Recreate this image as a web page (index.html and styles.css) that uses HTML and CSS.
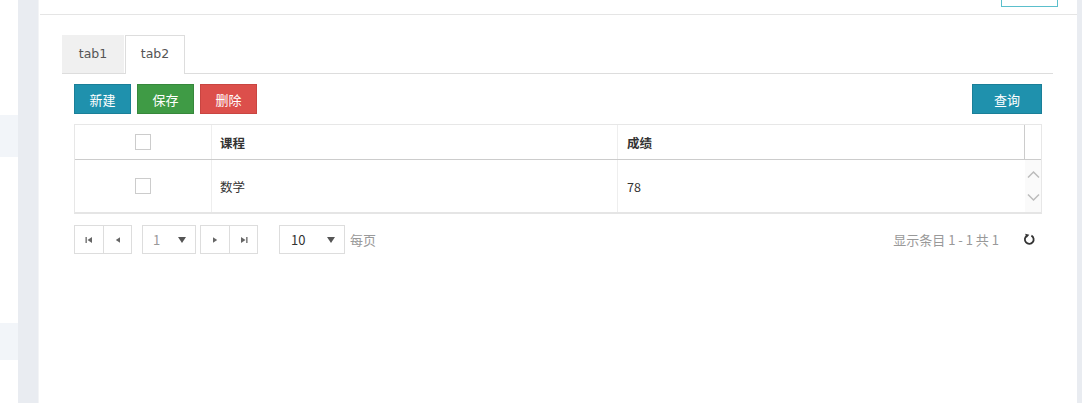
FILE: index.html
```html
<!DOCTYPE html>
<html>
	<head>
		<meta charset="UTF-8" />
		<title>tab2</title>
		<link rel="stylesheet" href="styles.css">
	</head>
	<body>
		<div class="side">
			<div class="side-item first"></div>
			<div class="side-item second"></div>
		</div>
		<div class="gutter"></div>
		<div class="panel">
			<div class="panel-head">
				<span class="head-btn"></span>
			</div>
			<div class="panel-body">
				<div class="tabs">
					<div class="tab">tab1</div>
					<div class="tab active">tab2</div>
				</div>
				<div class="tab-pane">
					<div class="toolbar">
						<button class="btn btn-info">新建</button>
						<button class="btn btn-success">保存</button>
						<button class="btn btn-danger">删除</button>
						<button class="btn btn-info right">查询</button>
					</div>
					<div class="grid">
						<div class="grid-row grid-head">
							<div class="cell check"><span class="box"></span></div>
							<div class="cell course">课程</div>
							<div class="cell score">成绩</div>
							<div class="cell pad"></div>
						</div>
						<div class="grid-row grid-body">
							<div class="cell check"><span class="box"></span></div>
							<div class="cell course">数学</div>
							<div class="cell score">78</div>
							<div class="cell scroll">
								<svg width="13" height="9" viewBox="0 0 13 9"><path d="M1 7.5 L6.5 2 L12 7.5" fill="none" stroke="#bbbbbb" stroke-width="1.5"/></svg>
								<svg width="13" height="9" viewBox="0 0 13 9"><path d="M1 1.5 L6.5 7 L12 1.5" fill="none" stroke="#bbbbbb" stroke-width="1.5"/></svg>
							</div>
						</div>
					</div>
					<div class="pager">
						<div class="pager-group">
							<span class="pg-btn"><svg width="8" height="8" viewBox="0 0 8 8"><rect x="0.5" y="1" width="1.3" height="6" fill="#666"/><path d="M7 1 L2.5 4 L7 7 Z" fill="#666"/></svg></span>
							<span class="pg-btn"><svg width="8" height="8" viewBox="0 0 8 8"><path d="M6 1.2 L1.8 4 L6 6.8 Z" fill="#666"/></svg></span>
						</div>
						<span class="pg-select page-num"><span class="val muted">1</span><span class="caret"></span></span>
						<div class="pager-group last">
							<span class="pg-btn"><svg width="8" height="8" viewBox="0 0 8 8"><path d="M2 1.2 L6.2 4 L2 6.8 Z" fill="#666"/></svg></span>
							<span class="pg-btn"><svg width="8" height="8" viewBox="0 0 8 8"><path d="M1 1 L5.5 4 L1 7 Z" fill="#666"/><rect x="6.2" y="1" width="1.3" height="6" fill="#666"/></svg></span>
						</div>
						<span class="pg-select page-size"><span class="val">10</span><span class="caret"></span></span>
						<span class="per-page">每页</span>
						<span class="pager-info">显示条目 1 - 1 共 1</span>
						<span class="refresh">
							<svg width="13" height="13" viewBox="0 0 13 13"><path d="M8.4 2.6 A4.4 4.4 0 1 1 3.8 2.8" fill="none" stroke="#333" stroke-width="1.8"/><path d="M2.2 0.8 L6.3 1.7 L3.5 5 Z" fill="#333"/></svg>
						</span>
					</div>
				</div>
			</div>
		</div>
		<div class="gutter thin"></div>
	</body>
</html>
```

FILE: styles.css
```css
body {
	margin: 0;
	height: 403px;
	display: flex;
	overflow: hidden;
	font-family: "Open Sans", "Noto Sans CJK SC", sans-serif;
	font-size: 13px;
	color: #333;
	background: #fff;
}
.side {
	width: 18px;
	flex: none;
}
.side-item {
	height: 42px;
	background: #f2f5f9;
}
.side-item.first {
	margin-top: 115px;
}
.side-item.second {
	margin-top: 166px;
	height: 37px;
}
.gutter {
	width: 20px;
	flex: none;
	background: #e9ecf1;
}
.gutter.thin {
	width: 5px;
}
.panel {
	flex: 1;
	background: #fff;
	border-left: 1px solid #f3f4f6;
}
.panel-head {
	height: 14px;
	border-bottom: 1px solid #e5e5e5;
	margin-left: 1px;
	display: flex;
	justify-content: flex-end;
	padding-right: 19px;
	overflow: hidden;
}
.head-btn {
	width: 55px;
	height: 28px;
	margin-top: -23px;
	border: 1px solid #5bbfcc;
}
.panel-body {
	padding: 20px 24px 0 23px;
}
.tabs {
	display: flex;
	height: 38px;
	border-bottom: 1px solid #dddddd;
}
.tab {
	width: 62px;
	height: 38px;
	line-height: 37px;
	text-align: center;
	background: #f0f0f0;
	color: #555;
	box-sizing: border-box;
	font-family: "DejaVu Sans", sans-serif;
	font-size: 12.5px;
}
.tab.active {
	width: 60px;
	margin-left: 1px;
	background: #fff;
	border: 1px solid #dddddd;
	border-bottom: none;
	height: 39px;
	line-height: 36px;
}
.tab-pane {
	padding: 0 11px 0 12px;
}
.toolbar {
	display: flex;
	gap: 6px;
	margin-top: 10px;
}
.btn {
	width: 57px;
	height: 30px;
	border: 1px solid;
	color: #fff;
	font-family: "Noto Sans CJK SC", sans-serif;
	font-size: 13px;
	padding: 0;
}
.btn-info {
	background: #1f91ad;
	border-color: #1a7f98;
}
.btn-success {
	background: #3f9b45;
	border-color: #36883b;
}
.btn-danger {
	background: #dc4f4b;
	border-color: #c94541;
}
.btn.right {
	margin-left: auto;
	width: 70px;
}
.grid {
	margin-top: 10px;
	border: 1px solid #e7e7e7;
	border-bottom: 2px solid #e5e5e5;
}
.grid-row {
	display: flex;
}
.grid-head {
	height: 34px;
	border-bottom: 1px solid #cccccc;
	font-weight: bold;
	color: #333;
}
.grid-body {
	height: 52px;
}
.cell {
	display: flex;
	align-items: center;
	box-sizing: border-box;
	font-family: "Noto Sans CJK SC", sans-serif;
	font-size: 12.5px;
}
.check {
	width: 137px;
	justify-content: center;
	border-right: 1px solid #eeeeee;
}
.box {
	width: 16px;
	height: 16px;
	border: 1px solid #cccccc;
	box-sizing: border-box;
	background: #fff;
}
.course {
	width: 406px;
	padding-left: 8px;
	border-right: 1px solid #eeeeee;
}
.score {
	width: 407px;
	padding-left: 9px;
}
.grid-head .score {
	border-right: 1px solid #cccccc;
}
.pad {
	flex: 1;
}
.scroll {
	flex: 1;
	flex-direction: column;
	justify-content: center;
	gap: 14px;
	background: #fafafa;
}
.pager {
	display: flex;
	align-items: center;
	margin-top: 11px;
	height: 29px;
}
.pager-group {
	display: flex;
}
.pg-btn {
	width: 30px;
	height: 29px;
	box-sizing: border-box;
	border: 1px solid #dddddd;
	display: flex;
	align-items: center;
	justify-content: center;
}
.pg-btn + .pg-btn {
	border-left: none;
	width: 28px;
}
.pg-select {
	height: 29px;
	box-sizing: border-box;
	border: 1px solid #dddddd;
	display: flex;
	align-items: center;
	padding: 0 6px 0 10px;
	font-family: "Noto Sans CJK SC", sans-serif;
}
.page-num {
	width: 54px;
	margin: 0 4px 0 10px;
}
.pager-group.last {
	margin-right: 21px;
}
.page-size {
	width: 66px;
	padding-left: 11px;
}
.val {
	flex: 1;
	color: #333;
}
.val.muted {
	color: #999;
}
.caret {
	width: 0;
	height: 0;
	border-left: 4px solid transparent;
	border-right: 4px solid transparent;
	border-top: 6px solid #555;
	margin-right: 3px;
}
.per-page {
	margin-left: 5px;
	color: #999;
	font-family: "Noto Sans CJK SC", sans-serif;
}
.pager-info {
	margin-left: auto;
	color: #999;
	font-family: "Noto Sans CJK SC", sans-serif;
}
.refresh {
	width: 13px;
	height: 13px;
	margin: 0 6px 0 24px;
	display: flex;
}
```
